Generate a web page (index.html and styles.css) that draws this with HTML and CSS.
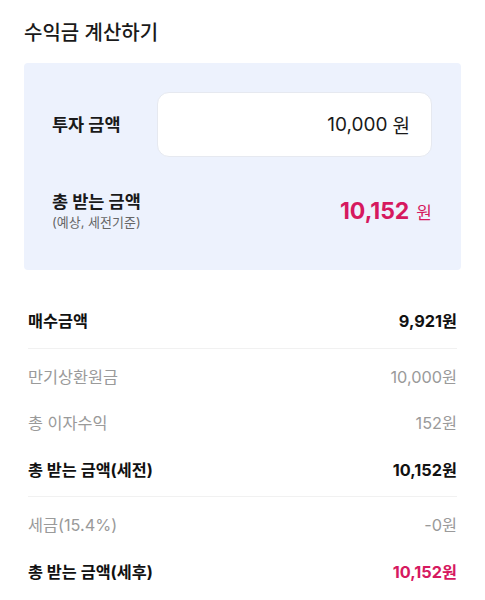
FILE: index.html
```html
<!DOCTYPE html>
<html lang="ko">
<head>
<meta charset="utf-8">
<link rel="stylesheet" href="styles.css">
</head>
<body>
<div class="page">
  <h1 class="title">수익금 계산하기</h1>
  <section class="calc">
    <div class="calc-row">
      <div class="calc-label">투자 금액</div>
      <div class="input-box"><span class="input-num">10,000</span> <span class="input-unit">원</span></div>
    </div>
    <div class="calc-row result">
      <div class="result-label">
        <div class="calc-label">총 받는 금액</div>
        <div class="calc-sub">(예상, 세전기준)</div>
      </div>
      <div class="result-value"><span class="result-num">10,152</span><span class="result-unit">원</span></div>
    </div>
  </section>
  <section class="list">
    <div class="group">
      <div class="row strong"><span>매수금액</span><span>9,921원</span></div>
    </div>
    <div class="group">
      <div class="row muted"><span>만기상환원금</span><span>10,000원</span></div>
      <div class="row muted"><span>총 이자수익</span><span>152원</span></div>
      <div class="row strong"><span>총 받는 금액(세전)</span><span>10,152원</span></div>
    </div>
    <div class="group">
      <div class="row muted"><span>세금(15.4%)</span><span>-0원</span></div>
      <div class="row strong"><span>총 받는 금액(세후)</span><span class="pink">10,152원</span></div>
    </div>
  </section>
</div>
</body>
</html>
```
FILE: styles.css
```css
* { box-sizing: border-box; }
html, body { margin: 0; padding: 0; background: #fff; }
body {
  font-family: Inter, "Noto Sans CJK KR", sans-serif;
  color: #111;
}
.page { padding: 20px 24px 0; }
.title {
  margin: 0;
  font-size: 20px;
  line-height: 26px;
  font-weight: 500;
  color: #1a1a1a;
}
.calc {
  margin-top: 17px;
  background: #edf2fd;
  border-radius: 4px;
  padding: 29px 29px 39px 28px;
  display: flex;
  flex-direction: column;
  gap: 33px;
}
.calc-row {
  display: flex;
  align-items: center;
}
.calc-label {
  font-size: 17.5px;
  line-height: 23px;
  font-weight: 700;
  color: #1a1a1a;
}
.calc-row > .calc-label { width: 105px; flex: none; }
.input-box {
  flex: 1;
  height: 65px;
  background: #fff;
  border: 1px solid #e6e9f0;
  border-radius: 12px;
  display: flex;
  align-items: center;
  justify-content: flex-end;
  padding-right: 21px;
  font-size: 19px;
  color: #1a1a1a;
  gap: 5px;
}
.result { justify-content: space-between; }
.calc-sub {
  font-size: 13px;
  line-height: 18px;
  color: #666;
}
.result-value {
  display: flex;
  align-items: baseline;
  gap: 7px;
  color: #d6195f;
}
.result-num { font-size: 23px; font-weight: 700; }
.result-unit { font-size: 17px; }
.list { margin: 27px 4px 0; }
.group {
  padding: 0 0 4px;
  border-bottom: 1px solid #f1f1f1;
  margin-bottom: 4px;
}
.group:last-child { border-bottom: none; }
.row {
  height: 46.5px;
  display: flex;
  align-items: center;
  justify-content: space-between;
  font-size: 16.3px;
}
.row.strong { font-weight: 700; color: #111; }
.row.muted { color: #9a9a9a; }
.pink { color: #d6195f; }
```
